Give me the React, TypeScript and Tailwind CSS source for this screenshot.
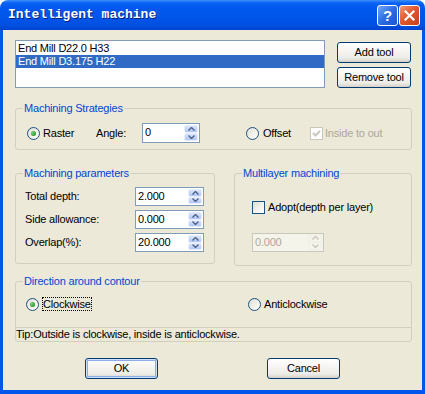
import React from 'react';

const Radio = ({ checked }: { checked?: boolean }) => (
  <span className="flex h-[13px] w-[13px] shrink-0 items-center justify-center rounded-full border border-[#1C5180] bg-[linear-gradient(135deg,#DCDBD3_0%,#F3F2EC_55%,#FFFFFF_100%)]">
    {checked && (
      <span className="h-[5px] w-[5px] rounded-full bg-[radial-gradient(circle_at_35%_35%,#7BD17B_0%,#2FA42F_60%,#1E8A1E_100%)]" />
    )}
  </span>
);

const Check = ({ checked, disabled }: { checked?: boolean; disabled?: boolean }) => (
  <span
    className={`flex h-[13px] w-[13px] shrink-0 items-center justify-center border ${
      disabled
        ? 'border-[#CAC8BB] bg-white'
        : 'border-[#1C5180] bg-[linear-gradient(135deg,#DCDBD3_0%,#F3F2EC_55%,#FFFFFF_100%)]'
    }`}
  >
    {checked && (
      <svg width="9" height="9" viewBox="0 0 9 9">
        <path d="M1 4 L3.5 6.5 L8 2" fill="none" stroke={disabled ? '#CAC8BB' : '#21A121'} strokeWidth="2" />
      </svg>
    )}
  </span>
);

const Arrow = ({ up, color }: { up?: boolean; color: string }) => (
  <svg width="7" height="4" viewBox="0 0 7 4">
    <path d={up ? 'M0.5 3.5 L3.5 0.5 L6.5 3.5' : 'M0.5 0.5 L3.5 3.5 L6.5 0.5'} fill="none" stroke={color} strokeWidth="1.4" />
  </svg>
);

const Spin = ({
  value,
  className,
  disabled,
}: {
  value: string;
  className: string;
  disabled?: boolean;
}) => (
  <div
    className={`flex shrink-0 border ${
      disabled ? 'border-[#C9C7BA] bg-[#F5F4EA]' : 'border-[#7F9DB9] bg-white'
    } ${className}`}
  >
    <span className={`flex-1 pl-[2px] leading-[17px] ${disabled ? 'text-[#ACA899]' : 'text-black'}`}>{value}</span>
    <div className="flex w-[16px] flex-col p-[1px]">
      {[true, false].map((up) => (
        <div
          key={String(up)}
          className={`flex flex-1 items-center justify-center rounded-[2px] border ${
            disabled
              ? 'border-[#F0EFE6] bg-[#F5F4EA]'
              : 'border-[#E8EEFC] bg-[linear-gradient(to_bottom,#D9E4FA_0%,#C1D3F8_60%,#B0C5F4_100%)]'
          }`}
        >
          <Arrow up={up} color={disabled ? '#C9C7BA' : '#4D6185'} />
        </div>
      ))}
    </div>
  </div>
);

const XPButton = ({
  children,
  className,
  isDefault,
}: {
  children: React.ReactNode;
  className: string;
  isDefault?: boolean;
}) => (
  <button
    className={`flex shrink-0 items-center justify-center rounded-[3px] border border-[#003C74] bg-[linear-gradient(to_bottom,#FFFFFF_0%,#F5F4F0_45%,#ECEBE6_80%,#D6D0C5_100%)] text-[11px] text-black ${
      isDefault ? 'shadow-[inset_0_0_0_1px_#CEE0FB,inset_0_0_0_2px_#8CAEE8]' : ''
    } ${className}`}
  >
    {children}
  </button>
);

const Group = ({
  title,
  className,
  children,
}: {
  title: string;
  className: string;
  children: React.ReactNode;
}) => (
  <fieldset className={`rounded-[3px] border border-[#D0D0BF] ${className}`}>
    <legend className="ml-[7px] px-[1px] leading-[14px] text-[#0046D5]">{title}</legend>
    {children}
  </fieldset>
);

export default function App() {
  const tools = ['End Mill D22.0 H33', 'End Mill D3.175 H22'];

  return (
    <div className="flex h-[394px] w-[425px] flex-col font-['Liberation_Sans',Arial,sans-serif] text-[11px] tracking-[-0.2px] text-black">
      {/* title bar */}
      <div className="flex h-[30px] shrink-0 items-center rounded-t-[8px] bg-[linear-gradient(to_bottom,#3D8FF9_0%,#0A62F5_10%,#0058EE_25%,#0055E9_60%,#004FE1_85%,#0043CF_100%)] pl-[8px] pr-[5px]">
        <span className="flex-1 font-['Liberation_Mono',monospace] text-[13px] font-bold tracking-normal text-white [text-shadow:1px_1px_0_#0A1E78]">
          Intelligent machine
        </span>
        <div className="flex h-[21px] w-[21px] items-center justify-center rounded-[3px] border border-white bg-[linear-gradient(135deg,#74A6F8_0%,#2C6CE4_50%,#1A55CF_100%)] font-['Liberation_Sans',sans-serif] text-[15px] font-bold leading-none text-white">
          ?
        </div>
        <div className="ml-[1px] flex h-[21px] w-[21px] items-center justify-center rounded-[3px] border border-white bg-[linear-gradient(135deg,#F19A77_0%,#E2582E_45%,#C4401A_100%)]">
          <svg width="11" height="11" viewBox="0 0 11 11">
            <path d="M1.5 1.5 L9.5 9.5 M9.5 1.5 L1.5 9.5" stroke="#FFFFFF" strokeWidth="2.2" strokeLinecap="square" />
          </svg>
        </div>
      </div>

      {/* client area */}
      <div className="flex flex-1 flex-col border-x-[3px] border-b-[4px] border-[#0055EA] bg-[#ECE9D8] pl-[12px] pr-[10px]">
        <div className="mt-[10px] flex items-start">
          <div className="h-[48px] w-[310px] border border-[#7F9DB9] bg-white pt-[1px]">
            {tools.map((t, i) => (
              <div
                key={t}
                className={`h-[13px] pl-[2px] leading-[13px] ${i === 1 ? 'bg-[#316AC5] text-white' : ''}`}
              >
                {t}
              </div>
            ))}
          </div>
          <div className="ml-[12px] flex flex-col gap-[4px] pt-[2px]">
            <XPButton className="h-[21px] w-[74px]">Add tool</XPButton>
            <XPButton className="h-[21px] w-[74px]">Remove tool</XPButton>
          </div>
        </div>

        <Group title="Machining Strategies" className="mt-[13px] h-[49px]">
          <div className="mt-[8px] flex h-[20px] items-center pl-[11px]">
            <div className="flex w-[69px] items-center">
              <Radio checked />
              <span className="ml-[3px]">Raster</span>
            </div>
            <span className="w-[46px]">Angle:</span>
            <Spin value="0" className="h-[20px] w-[58px]" />
            <div className="ml-[46px] flex w-[64px] items-center">
              <Radio />
              <span className="ml-[4px]">Offset</span>
            </div>
            <Check checked disabled />
            <span className="ml-[2px] text-[#ACA899]">Inside to out</span>
          </div>
        </Group>

        <div className="mt-[16px] flex items-start gap-[19px]">
          <Group title="Machining parameters" className="h-[98px] w-[200px]">
            <div className="mt-[7px] flex flex-col gap-[4px] pl-[9px]">
              {[
                ['Total depth:', '2.000'],
                ['Side allowance:', '0.000'],
                ['Overlap(%):', '20.000'],
              ].map(([label, value]) => (
                <div key={label} className="flex h-[19px] items-center">
                  <span className="w-[110px]">{label}</span>
                  <Spin value={value} className="h-[19px] w-[69px]" />
                </div>
              ))}
            </div>
          </Group>
          <Group title="Multilayer machining" className="h-[100px] flex-1">
            <div className="pl-[17px]">
              <div className="mt-[19px] flex items-center">
                <Check />
                <span className="ml-[3px]">Adopt(depth per layer)</span>
              </div>
              <Spin value="0.000" disabled className="mt-[17px] h-[19px] w-[72px]" />
            </div>
          </Group>
        </div>

        <Group title="Direction around contour" className="mt-[8px] h-[68px]">
          <div className="mt-[9px] flex h-[14px] items-center pl-[10px]">
            <div className="flex w-[222px] items-center">
              <Radio checked />
              <span className="ml-[3px] border border-dotted border-black px-[0px] leading-[12px]">Clockwise</span>
            </div>
            <Radio />
            <span className="ml-[3px]">Anticlockwise</span>
          </div>
          <div className="mt-[16px] h-[14px] border-t border-[#D0D0BF] leading-[13px]">
            Tip:Outside is clockwise, inside is anticlockwise.
          </div>
        </Group>

        <div className="mt-[16px] flex">
          <XPButton isDefault className="ml-[70px] h-[21px] w-[73px]">
            OK
          </XPButton>
          <XPButton className="ml-[109px] h-[21px] w-[73px]">Cancel</XPButton>
        </div>
      </div>
    </div>
  );
}
